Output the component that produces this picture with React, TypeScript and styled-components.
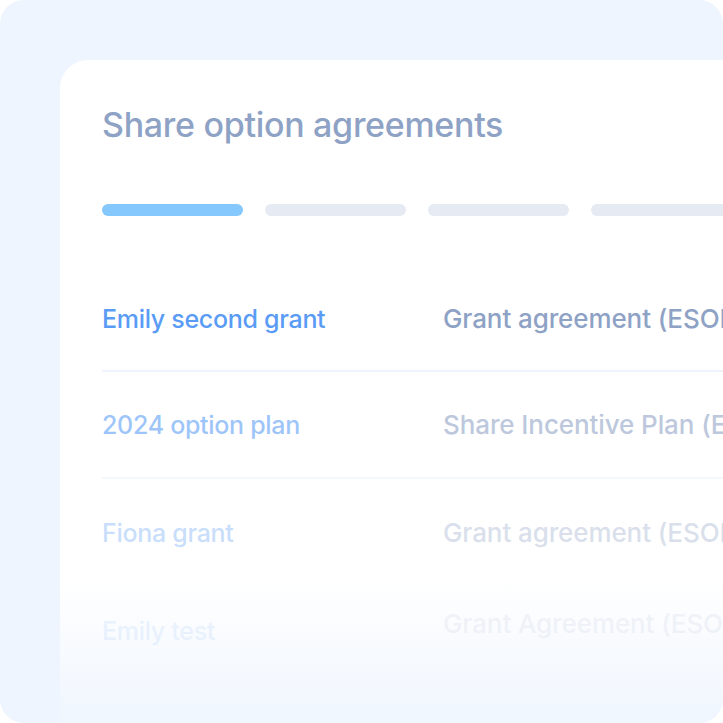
import React from "react";
import styled, { createGlobalStyle } from "styled-components";

const Global = createGlobalStyle`
  html, body { margin: 0; padding: 0; background: #ffffff; }
  body { font-family: Inter, "Noto Sans", sans-serif; }
`;

const Panel = styled.div`
  width: 723px;
  height: 723px;
  box-sizing: border-box;
  background: #eef5fe;
  border-radius: 24px;
  padding: 60px 0 0 60px;
  overflow: hidden;
  display: flex;
`;

const Card = styled.div`
  flex: 1;
  position: relative;
  background: linear-gradient(to bottom, #ffffff 0%, #ffffff 78%, #f0f6fe 100%);
  border-radius: 28px 0 0 0;
  padding: 45px 0 0 42px;
  display: flex;
  flex-direction: column;
  overflow: hidden;
`;

const Title = styled.h1`
  margin: 0;
  font-family: Inter, sans-serif;
  font-weight: 500;
  font-size: 34px;
  line-height: 40px;
  letter-spacing: -0.3px;
  color: #8ea2c5;
`;

const Steps = styled.div`
  display: flex;
  gap: 22px;
  margin-top: 59px;
`;

const Step = styled.div<{ $active?: boolean }>`
  flex: 0 0 141px;
  height: 12px;
  border-radius: 6px;
  background: ${(p) => (p.$active ? "#85c8fd" : "#e6ebf3")};
`;

const Table = styled.div`
  margin-top: 51px;
  display: flex;
  flex-direction: column;
`;

const Row = styled.div<{ $divider?: boolean; $fade: number; $height: number }>`
  display: grid;
  grid-template-columns: 341px 1fr;
  align-items: center;
  height: ${(p) => p.$height}px;
  border-bottom: ${(p) => (p.$divider ? "2px solid #edf4fe" : "2px solid transparent")};
  opacity: ${(p) => p.$fade};
  white-space: nowrap;
  overflow: hidden;
`;

const Name = styled.span`
  font-family: Inter, sans-serif;
  font-weight: 500;
  font-size: 25px;
  letter-spacing: -0.3px;
  color: #5a9cf5;
`;

const Kind = styled.span<{ $lift?: number }>`
  font-family: Inter, sans-serif;
  font-weight: 500;
  font-size: 26px;
  letter-spacing: -0.1px;
  color: #8ea2c5;
  margin-bottom: ${(p) => (p.$lift ?? 0) * 2}px;
`;

const rows = [
  { name: "Emily second grant", kind: "Grant agreement (ESOP)", fade: 1, divider: true, height: 103 },
  { name: "2024 option plan", kind: "Share Incentive Plan (EMI)", fade: 0.58, divider: true, height: 105 },
  { name: "Fiona grant", kind: "Grant agreement (ESOP)", fade: 0.33, divider: false, height: 107 },
  { name: "Emily test", kind: "Grant Agreement (ESOP)", fade: 0.1, divider: false, height: 86, lift: 8 },
];

export default function App() {
  return (
    <>
      <Global />
      <Panel>
        <Card>
          <Title>Share option agreements</Title>
          <Steps>
            <Step $active />
            <Step />
            <Step />
            <Step />
          </Steps>
          <Table>
            {rows.map((r) => (
              <Row key={r.name} $divider={r.divider} $fade={r.fade} $height={r.height}>
                <Name>{r.name}</Name>
                <Kind $lift={r.lift}>{r.kind}</Kind>
              </Row>
            ))}
          </Table>
        </Card>
      </Panel>
    </>
  );
}
